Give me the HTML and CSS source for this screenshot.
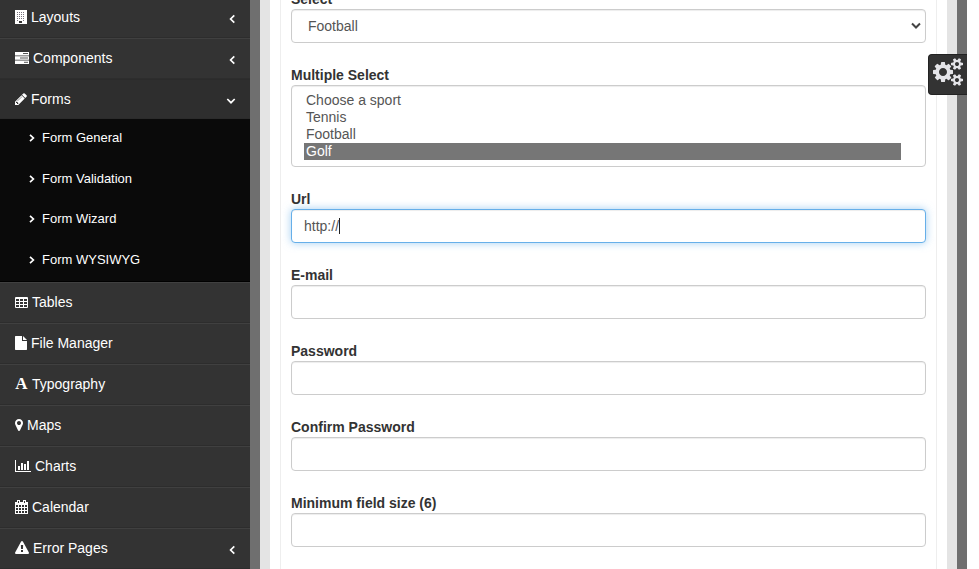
FILE: index.html
```html
<!DOCTYPE html>
<html lang="en">
<head>
<meta charset="utf-8">
<title>Form Validation</title>
<link rel="stylesheet" href="styles.css">
</head>
<body>
<div class="page">
  <nav class="sidebar">
    <a class="item"><svg class="icon" width="12" height="14" viewBox="0 0 12 14"><path fill="#fff" d="M0 0h12v14H0z"/><path stroke="#77717b" stroke-dasharray="1 1" d="M2 2.500h8M2 4.500h8M2 6.500h8M2 8.500h8M2 10.500h2M8 10.500h2"/><path fill="#333" d="M4 11h3v2H4z"/></svg>Layouts<svg class="arrow" width="8" height="10" viewBox="0 0 8 10"><path d="M6.300 1.300 2.600 5l3.700 3.700"/></svg></a>
    <a class="item"><svg class="icon" width="14" height="14" viewBox="0 0 14 14"><path fill="#fff" d="M0 1h14v3.500H0zM0 5.200h14v3.500H0zM0 9.400h14V13H0z"/><path stroke="#555" d="M8 2.500h5M5 7h8M9 11.300h4"/></svg>Components<svg class="arrow" width="8" height="10" viewBox="0 0 8 10"><path d="M6.300 1.300 2.600 5l3.700 3.700"/></svg></a>
    <a class="item active"><svg class="icon" width="12" height="14" viewBox="128 0 1536 1792"><path fill="#fff" d="M491 1536l91-91-235-235-91 91v107h128v128h107zm523-928q0-22-22-22-10 0-17 7l-542 542q-7 7-7 17 0 22 22 22 10 0 17-7l542-542q7-7 7-17zm-54-192l416 416-832 832h-416v-416zm683 96q0 53-37 90l-166 166-416-416 166-165q36-38 90-38 53 0 91 38l235 234q37 39 37 91z"/></svg>Forms<svg class="arrow down" width="10" height="8" viewBox="0 0 10 8"><path d="M1.300 2 5 5.700 8.700 2"/></svg></a>
    <div class="submenu">
      <a><svg width="6" height="8" viewBox="0 0 6 8"><path d="M1 .8 4.400 4 1 7.200"/></svg>Form General</a>
      <a><svg width="6" height="8" viewBox="0 0 6 8"><path d="M1 .8 4.400 4 1 7.200"/></svg>Form Validation</a>
      <a><svg width="6" height="8" viewBox="0 0 6 8"><path d="M1 .8 4.400 4 1 7.200"/></svg>Form Wizard</a>
      <a><svg width="6" height="8" viewBox="0 0 6 8"><path d="M1 .8 4.400 4 1 7.200"/></svg>Form WYSIWYG</a>
    </div>
    <a class="item"><svg class="icon" width="13" height="14" viewBox="0 0 13 14"><rect y="2" width="13" height="11" rx="1" fill="#fff"/><path fill="#333" d="M1 4h3v2H1zM5 4h3v2H5zM9 4h3v2H9zM1 7h3v2H1zM5 7h3v2H5zM9 7h3v2H9zM1 10h3v2H1zM5 10h3v2H5zM9 10h3v2H9z"/></svg>Tables</a>
    <a class="item"><svg class="icon" width="12" height="14" viewBox="0 0 12 14"><path fill="#fff" d="M.5 0H7v5h5v8.500l-.5.5H.5l-.5-.5V.5zM8 0l4 4H8z"/></svg>File Manager</a>
    <a class="item"><span class="icon serif">A</span>Typography</a>
    <a class="item"><svg class="icon" width="8" height="14" viewBox="384 0 1024 1792"><path fill="#fff" d="M1152 640q0-106-75-181t-181-75-181 75-75 181 75 181 181 75 181-75 75-181zm256 0q0 109-33 179l-364 774q-16 33-47.500 52t-67.500 19-67.500-19-46.500-52l-365-774q-33-70-33-179 0-212 150-362t362-150 362 150 150 362z"/></svg>Maps</a>
    <a class="item"><svg class="icon" width="16" height="14" viewBox="0 0 16 14"><path fill="#fff" d="M0 1h1v11h15v1H0zM3 7h2v4H3zM6 4h2v7H6zM9 5h2v6H9zM12 2h2v9h-2z"/></svg>Charts</a>
    <a class="item"><svg class="icon" width="13" height="14" viewBox="0 0 13 14"><path fill="#fff" d="M0 2h13v12H0zM2 0h3v3H2zM8 0h3v3H8z"/><path fill="#333" d="M3 1h1v2H3zM9 1h1v2H9zM1 5h2v2H1zM4 5h2v2H4zM7 5h2v2H7zM10 5h2v2h-2zM1 8h2v2H1zM4 8h2v2H4zM7 8h2v2H7zM10 8h2v2h-2zM1 11h2v2H1zM4 11h2v2H4zM7 11h2v2H7zM10 11h2v2h-2z"/></svg>Calendar</a>
    <a class="item"><svg class="icon" width="14" height="14" viewBox="0 0 1792 1792"><path fill="#fff" d="M1024 1375v-190q0-14-9.500-23.500t-22.500-9.500h-192q-13 0-22.500 9.500t-9.500 23.500v190q0 14 9.500 23.500t22.500 9.500h192q13 0 22.500-9.500t9.500-23.500zm-2-374l18-459q0-12-10-19-13-11-24-11h-220q-11 0-24 11-10 7-10 21l17 457q0 10 10 16.500t24 6.500h185q14 0 23.500-6.500t10.500-16.500zm-14-934l768 1408q35 63-2 126-17 29-46.500 46t-63.500 17h-1536q-34 0-63.500-17t-46.500-46q-37-63-2-126l768-1408q17-31 47-49t65-18 65 18 47 49z"/></svg>Error Pages<svg class="arrow" width="8" height="10" viewBox="0 0 8 10"><path d="M6.300 1.300 2.600 5l3.700 3.700"/></svg></a>
  </nav>
  <main class="content">
    <form class="panel">
      <div class="field"><label>Select</label><div class="control select">Football<svg width="10" height="8" viewBox="0 0 10 8"><path d="M1 1.500 5 5.500 9 1.500" fill="none" stroke="#444" stroke-width="2"/></svg></div></div>
      <div class="field"><label>Multiple Select</label><div class="control list"><span>Choose a sport</span><span>Tennis</span><span>Football</span><span class="selected">Golf</span></div></div>
      <div class="field"><label>Url</label><div class="control focus">http://<i class="caret"></i></div></div>
      <div class="field"><label>E-mail</label><div class="control"></div></div>
      <div class="field"><label>Password</label><div class="control"></div></div>
      <div class="field"><label>Confirm Password</label><div class="control"></div></div>
      <div class="field"><label>Minimum field size (6)</label><div class="control"></div></div>
    </form>
  </main>
  <div class="settings"><svg width="30" height="28" viewBox="0 0 1920 1792"><path fill="#e4e4e8" d="M896 896q0-106-75-181t-181-75-181 75-75 181 75 181 181 75 181-75 75-181zm768 512q0-52-38-90t-90-38-90 38-38 90q0 53 37.500 90.500t90.500 37.500 90.500-37.500 37.500-90.500zm0-1024q0-52-38-90t-90-38-90 38-38 90q0 53 37.500 90.500t90.500 37.500 90.500-37.500 37.500-90.500zm-384 421v185q0 10-7 19.500t-16 10.500l-155 24q-11 35-32 76 34 48 90 115 7 11 7 20 0 12-7 19-23 30-82.500 89.500t-78.500 59.500q-11 0-21-7l-115-90q-37 19-77 31-11 108-23 155-7 24-30 24h-186q-11 0-20-7.500t-10-17.500l-23-153q-34-10-75-31l-118 89q-7 7-20 7-11 0-21-8-144-133-144-160 0-9 7-19 10-14 41-53t47-61q-23-44-35-82l-152-24q-10-1-17-9.500t-7-19.500v-185q0-10 7-19.500t16-10.500l155-24q11-35 32-76-34-48-90-115-7-11-7-20 0-12 7-20 22-30 82-89t79-59q11 0 21 7l115 90q34-18 77-32 11-108 23-154 7-24 30-24h186q11 0 20 7.500t10 17.500l23 153q34 10 75 31l118-89q8-7 20-7 11 0 21 8 144 133 144 160 0 8-7 19-12 16-42 54t-45 60q23 48 34 82l152 23q10 2 17 10.500t7 19.500zm640 533v140q0 16-149 31-12 27-30 52 51 113 51 138 0 4-4 7-122 71-124 71-8 0-46-47t-52-68q-20 2-30 2t-30-2q-14 21-52 68t-46 47q-2 0-124-71-4-3-4-7 0-25 51-138-18-25-30-52-149-15-149-31v-140q0-16 149-31 13-29 30-52-51-113-51-138 0-4 4-7 4-2 35-20t59-34 30-16q8 0 46 46.500t52 67.500q20-2 30-2t30 2q51-71 92-112l6-2q4 0 124 70 4 3 4 7 0 25-51 138 17 23 30 52 149 15 149 31zm0-1024v140q0 16-149 31-12 27-30 52 51 113 51 138 0 4-4 7-122 71-124 71-8 0-46-47t-52-68q-20 2-30 2t-30-2q-14 21-52 68t-46 47q-2 0-124-71-4-3-4-7 0-25 51-138-18-25-30-52-149-15-149-31v-140q0-16 149-31 13-29 30-52-51-113-51-138 0-4 4-7 4-2 35-20t59-34 30-16q8 0 46 46.500t52 67.500q20-2 30-2t30 2q51-71 92-112l6-2q4 0 124 70 4 3 4 7 0 25-51 138 17 23 30 52 149 15 149 31z"/></svg></div>
</div>
</body>
</html>
```
FILE: styles.css
```css
* { box-sizing: border-box; }
body {
  margin: 0;
  height: 569px;
  overflow: hidden;
  background: #fff;
  color: #333;
  font: 14px/20px "Liberation Sans", Arial, sans-serif;
}
.page {
  position: relative;
  display: flex;
  width: 967px;
  height: 569px;
  background: #6f6f6f;
  overflow: hidden;
}
.sidebar {
  width: 250px;
  flex: none;
  margin-top: -3px;
  height: 575px;
  background: #333;
  color: #fff;
}
.item {
  display: flex;
  align-items: center;
  height: 41px;
  padding: 0 14px 1px 15px;
  border-top: 1px solid #404040;
  border-bottom: 1px solid #2d2d2d;
}
.item.active { background: #2e2e2e; border-color: #2b2b2b; height: 40px; padding-bottom: 0; }
.icon { flex: none; margin-right: 4px; }
.serif {
  width: 13px;
  font: bold 17px/14px "Liberation Serif", serif;
  text-align: center;
}
.arrow { margin-left: auto; position: relative; top: 2px; }
.arrow path, .submenu path { fill: none; stroke: #fff; stroke-width: 1.700; }
.submenu {
  height: 163px;
  background: #0a0a0a;
  border-bottom: 1px solid #000;
  font-size: 13px;
}
.submenu a {
  display: flex;
  align-items: center;
  gap: 7px;
  height: 40.500px;
  padding: 0 0 2px 29px;
}
.content {
  width: 697px;
  margin-left: 10px;
  padding: 0 10px;
  background: #e4e4e4;
}
.panel {
  position: relative;
  height: 569px;
  overflow: hidden;
  background: #fff;
  padding: 0 21px;
}
.panel::before {
  content: "";
  position: absolute;
  inset: 0 10px;
  border: solid #eee;
  border-width: 0 1px;
}
.field { position: relative; margin-bottom: 22px; }
.field:first-child { margin-top: -11px; }
label { display: block; font-weight: bold; line-height: 20px; }
.control {
  display: flex;
  align-items: center;
  height: 34px;
  padding: 0 12px;
  border: 1px solid #ccc;
  border-radius: 4px;
  background: #fff;
  color: #555;
  box-shadow: inset 0 1px 1px rgba(0,0,0,.075);
}
.select { justify-content: space-between; padding: 0 4px 0 16px; }
.list {
  display: block;
  height: 82px;
  padding: 6px 24px 6px 12px;
}
.list span { display: block; height: 17px; padding-left: 2px; line-height: 17px; }
.list .selected { background: #767676; color: #fff; }
.focus {
  border-color: #66afe9;
  box-shadow: inset 0 1px 1px rgba(0,0,0,.075), 0 0 8px rgba(102,175,233,.6);
}
.caret { width: 1px; height: 16px; background: #222; }
.settings {
  position: absolute;
  top: 54px;
  right: 0;
  width: 39px;
  height: 41px;
  padding: 3px 0 0 5px;
  background: #333;
  border: 1px solid #222;
  border-right: 0;
  border-radius: 4px 0 0 4px;
}
.settings svg { display: block; margin-left: -1px; }
```
